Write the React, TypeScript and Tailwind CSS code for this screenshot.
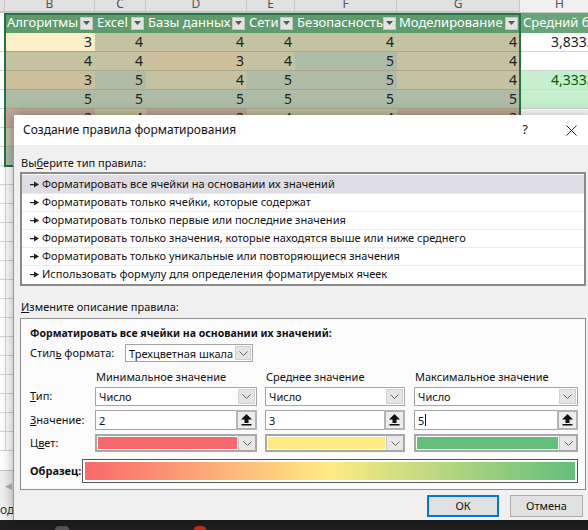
import React from 'react';

const colLetters = [
  { l: '', w: 'w-[5px]' },
  { l: 'B', w: 'w-[90px]' },
  { l: 'C', w: 'w-[51px]' },
  { l: 'D', w: 'w-[101px]' },
  { l: 'E', w: 'w-[48px]' },
  { l: 'F', w: 'w-[102px]' },
  { l: 'G', w: 'w-[123px]' },
  { l: 'H', w: 'w-[80px]' },
];

const heads = ['Алгоритмы', 'Excel', 'Базы данных', 'Сети', 'Безопасность', 'Моделирование'];

// cell colours as they appear under the selection tint
const K = 'bg-[#c4c2a0]';
const T = 'bg-[#cdbe9c]';
const G = 'bg-[#aebca7]';
const R = 'bg-[#c6a796]';

const rows: { v: string[]; c: string[]; h: string; hc: string }[] = [
  { v: ['3', '4', '4', '4', '4', '4'], c: ['bg-[#fdf0c9]', K, K, K, K, K], h: '3,8333', hc: 'bg-white text-[#222]' },
  { v: ['4', '4', '3', '4', '5', '4'], c: [K, K, T, K, G, K], h: '', hc: 'bg-white' },
  { v: ['3', '5', '4', '5', '5', '4'], c: [T, G, K, G, G, K], h: '4,3333', hc: 'bg-[#c6efce] text-[#006100]' },
  { v: ['5', '5', '5', '5', '5', '5'], c: [G, G, G, G, G, G], h: '', hc: 'bg-[#c6efce]' },
  { v: ['2', '4', '2', '4', '4', '2'], c: [R, K, R, K, K, R], h: '', hc: 'bg-white' },
  { v: ['', '', '', '', '', ''], c: [K, K, K, K, K, K], h: '', hc: 'bg-white' },
  { v: ['', '', '', '', '', ''], c: [G, G, G, G, G, G], h: '', hc: 'bg-white' },
];

const colW = ['w-[90px]', 'w-[51px]', 'w-[101px]', 'w-[48px]', 'w-[102px]', 'w-[123px]'];

const FilterBtn = () => (
  <span className="w-[13px] h-[13px] bg-[#e3e3e3] border border-[#c4c4c4] flex items-center justify-center shrink-0">
    <svg width="7" height="4" viewBox="0 0 7 4">
      <polygon points="0,0 7,0 3.5,4" fill="#555" />
    </svg>
  </span>
);

const Sheet = () => (
  <div className="flex flex-col h-full bg-white font-['Noto_Sans',sans-serif]">
    <div className="flex h-[13px] shrink-0 overflow-hidden">
      {colLetters.map((c, i) => (
        <div
          key={i}
          className={`${c.w} shrink-0 border-r border-[#c6c6c6] text-center text-[12px] leading-[8px] text-[#555] ${
            i === 7 ? 'bg-[#f0f0f0] border-b border-[#c6c6c6]' : 'bg-[#e1e1e1] border-b-2 border-[#217346]'
          }`}
        >
          {c.l}
        </div>
      ))}
    </div>
    <div className="flex h-[20px] shrink-0">
      <div className="w-[5px] shrink-0 bg-white" />
      {heads.map((h, i) => (
        <div key={i} className={`${colW[i]} shrink-0 bg-[#5e9c6c] flex items-center justify-between pl-[2px] pr-[2px] text-white text-[13px] overflow-hidden whitespace-nowrap`}>
          <span>{h}</span>
          <FilterBtn />
        </div>
      ))}
      <div className="w-[80px] shrink-0 bg-[#68a677] text-white text-[13px] pl-[3px] flex items-center whitespace-nowrap overflow-hidden">Средний балл</div>
    </div>
    {rows.map((r, ri) => (
      <div key={ri} className="flex h-[19px] shrink-0">
        <div className="w-[5px] shrink-0 bg-white border-b border-[#d4d4d4]" />
        {r.v.map((v, i) => (
          <div key={i} className={`${colW[i]} ${r.c[i]} shrink-0 border-b border-[#a9a78e] text-right pr-[3px] text-[14px] leading-[18px] text-[#222]`}>
            {v}
          </div>
        ))}
        <div className={`w-[80px] shrink-0 ${r.hc} border-b border-[#d4d4d4] border-l border-l-[#d4d4d4] text-[14px] leading-[18px] whitespace-nowrap overflow-hidden pl-[30px]`}>
          {r.h}
        </div>
      </div>
    ))}
    <div className="flex-1 flex flex-col overflow-hidden">
      {Array.from({ length: 15 }).map((_, i) => (
        <div key={i} className="h-[19px] shrink-0 flex border-b border-[#d4d4d4]">
          <div className="w-[6px] border-r border-[#d4d4d4]" />
        </div>
      ))}
    </div>
    <div className="h-[30px] shrink-0 bg-[#f0f0f0] border-t border-[#c6c6c6] flex items-center pl-[5px] text-[9px] text-[#b0b0b0]">◀</div>
    <div className="h-[20px] shrink-0 bg-[#f3f3f3] flex items-center text-[12px] text-[#333] leading-none">од</div>
    <div className="h-[10px] shrink-0 bg-[#1f1f1f] flex items-end">
      <div className="ml-[55px] w-[14px] h-[4px] rounded-t-full bg-[#555]" />
      <div className="ml-[125px] w-[12px] h-[4px] rounded-t-full bg-[#c42b1c]" />
    </div>
  </div>
);

const ListArrow = () => (
  <svg width="9" height="7" viewBox="0 0 9 7" className="shrink-0">
    <rect x="0" y="3" width="5" height="1.2" fill="#222" />
    <polygon points="4,0.5 9,3.5 4,6.5" fill="#222" />
  </svg>
);

const Chevron = () => (
  <svg width="9" height="5" viewBox="0 0 9 5">
    <path d="M0.5 0.5 L4.5 4.5 L8.5 0.5" fill="none" stroke="#606060" strokeWidth="1" />
  </svg>
);

const UpIcon = () => (
  <svg width="11" height="12" viewBox="0 0 11 12">
    <polygon points="5.5,0 11,5.5 7.5,5.5 7.5,9 3.5,9 3.5,5.5 0,5.5" fill="#111" />
    <rect x="0.5" y="10" width="10" height="1.5" fill="#111" />
  </svg>
);

const ruleTypes = [
  'Форматировать все ячейки на основании их значений',
  'Форматировать только ячейки, которые содержат',
  'Форматировать только первые или последние значения',
  'Форматировать только значения, которые находятся выше или ниже среднего',
  'Форматировать только уникальные или повторяющиеся значения',
  'Использовать формулу для определения форматируемых ячеек',
];

const Select = ({ text, w }: { text: string; w: string }) => (
  <div className={`${w} h-[19px] border border-[#a5a5a5] bg-white flex items-center`}>
    <span className="flex-1 pl-[3px] text-[11px] text-[#111] leading-none">{text}</span>
    <span className="w-[17px] h-[15px] mr-[1px] bg-[#e5e5e5] border border-[#cfcfcf] flex items-center justify-center">
      <Chevron />
    </span>
  </div>
);

const ValueInput = ({ text, w, caret }: { text: string; w: string; caret?: boolean }) => (
  <div className={`${w} h-[20px] border border-[#a5a5a5] bg-white flex items-center`}>
    <span className="flex-1 pl-[3px] text-[11px] text-[#111] leading-none flex items-center">
      {text}
      {caret && <span className="inline-block w-px h-[12px] bg-[#111] ml-px" />}
    </span>
    <span className="w-[21px] h-[20px] -mr-px border-2 border-[#b4b4b4] bg-[#ececec] flex items-center justify-center">
      <UpIcon />
    </span>
  </div>
);

const ColorSelect = ({ color, w }: { color: string; w: string }) => (
  <div className={`${w} h-[18px] border-2 border-[#a8a8a8] bg-white flex items-stretch`}>
    <span className={`flex-1 m-[1px] ${color}`} />
    <span className="w-[17px] bg-[#e8e8e8] border-l border-[#c8c8c8] flex items-center justify-center">
      <Chevron />
    </span>
  </div>
);

const Dialog = () => (
  <div className="absolute left-[13px] top-[115px] w-[581px] h-[405px] bg-[#f0f0f0] border-l border-[#9a9a9a] shadow-[0_0_12px_rgba(0,0,0,0.35)] flex flex-col font-['Noto_Sans',sans-serif] text-[#111]">
    <div className="h-[30px] shrink-0 bg-white flex items-center pl-[9px] text-[12px]">
      <span className="flex-1">Создание правила форматирования</span>
      <span className="w-[46px] text-center text-[13px] text-[#222]">?</span>
      <span className="w-[46px] flex justify-center">
        <svg width="11" height="11" viewBox="0 0 11 11">
          <path d="M0.5 0.5 L10.5 10.5 M10.5 0.5 L0.5 10.5" stroke="#222" strokeWidth="1" />
        </svg>
      </span>
    </div>
    <div className="flex flex-col pl-[6px] pr-[8px]">
      <div className="mt-[10px] h-[16px] leading-[16px] text-[11px] pl-px">
        Вы<span className="underline">б</span>ерите тип правила:
      </div>
      <div className="mt-px h-[114px] border-2 border-[#8a8a8a] bg-white pt-px flex flex-col">
        {ruleTypes.map((t, i) => (
          <div
            key={i}
            className={`h-[18px] shrink-0 flex items-center gap-[3px] pl-[8px] text-[11px] whitespace-nowrap ${
              i === 0 ? 'bg-[#dedde3]' : 'border-t border-[#ececec]'
            }`}
          >
            <ListArrow />
            <span>{t}</span>
          </div>
        ))}
      </div>
      <div className="mt-[13px] h-[16px] leading-[16px] text-[11px] pl-px">
        <span className="underline">И</span>змените описание правила:
      </div>
      <div className="mt-[3px] h-[172px] border border-[#8c8c8c] bg-[#fbfbfb] pl-[9px] pt-[6px] flex flex-col">
        <div className="h-[16px] leading-[16px] text-[10.5px] font-bold">Форматировать все ячейки на основании их значений:</div>
        <div className="mt-[3px] flex items-center h-[18px]">
          <span className="w-[95px] text-[11px]">
            Стил<span className="underline">ь</span> формата:
          </span>
          <div className="w-[128px] h-[18px] border border-[#a5a5a5] bg-white flex items-center">
            <span className="flex-1 pl-[3px] text-[11px] leading-none">Трехцветная шкала</span>
            <span className="w-[16px] h-[14px] mr-[1px] bg-[#e5e5e5] border border-[#cfcfcf] flex items-center justify-center">
              <Chevron />
            </span>
          </div>
        </div>
        <div className="mt-[7px] h-[16px] flex items-center text-[11px]">
          <span className="w-[66px]" />
          <span className="w-[170px]">Минимальное значение</span>
          <span className="w-[149px]">Среднее значение</span>
          <span>Максимальное значение</span>
        </div>
        <div className="mt-[2px] flex items-center">
          <span className="w-[65px] text-[11px]">
            <span className="underline">Т</span>ип:
          </span>
          <Select text="Число" w="w-[162px]" />
          <span className="w-[8px]" />
          <Select text="Число" w="w-[140px]" />
          <span className="w-[9px]" />
          <Select text="Число" w="w-[164px]" />
        </div>
        <div className="mt-[4px] flex items-center">
          <span className="w-[65px] text-[11px]">
            <span className="underline">З</span>начение:
          </span>
          <ValueInput text="2" w="w-[162px]" />
          <span className="w-[8px]" />
          <ValueInput text="3" w="w-[140px]" />
          <span className="w-[9px]" />
          <ValueInput text="5" w="w-[164px]" caret />
        </div>
        <div className="mt-[4px] flex items-center">
          <span className="w-[65px] text-[11px]">
            Ц<span className="underline">в</span>ет:
          </span>
          <ColorSelect color="bg-[#f8696b]" w="w-[162px]" />
          <span className="w-[8px]" />
          <ColorSelect color="bg-[#ffeb84]" w="w-[140px]" />
          <span className="w-[9px]" />
          <ColorSelect color="bg-[#63be7b]" w="w-[164px]" />
        </div>
        <div className="mt-[7px] flex items-center">
          <span className="w-[52px] text-[11px] font-bold">Образец:</span>
          <div className="w-[496px] h-[24px] border border-[#555] bg-white p-[2px]">
            <div className="h-full bg-[linear-gradient(to_right,#f8696b,#ffeb84_50%,#63be7b)]" />
          </div>
        </div>
      </div>
      <div className="mt-[5px] flex justify-end gap-[11px] pr-[3px]">
        <button className="w-[72px] h-[22px] border-2 border-[#0078d7] bg-[#e1e1e1] text-[11px] text-[#111]">ОК</button>
        <button className="w-[73px] h-[22px] border border-[#adadad] bg-[#e1e1e1] text-[11px] text-[#111]">Отмена</button>
      </div>
    </div>
  </div>
);

export default function App() {
  return (
    <div className="relative w-[588px] h-[530px] overflow-hidden">
      <Sheet />
      <div className="absolute left-[4px] top-[13px] w-[517px] h-[154px] border-2 border-[#217346] pointer-events-none" />
      <Dialog />
    </div>
  );
}
